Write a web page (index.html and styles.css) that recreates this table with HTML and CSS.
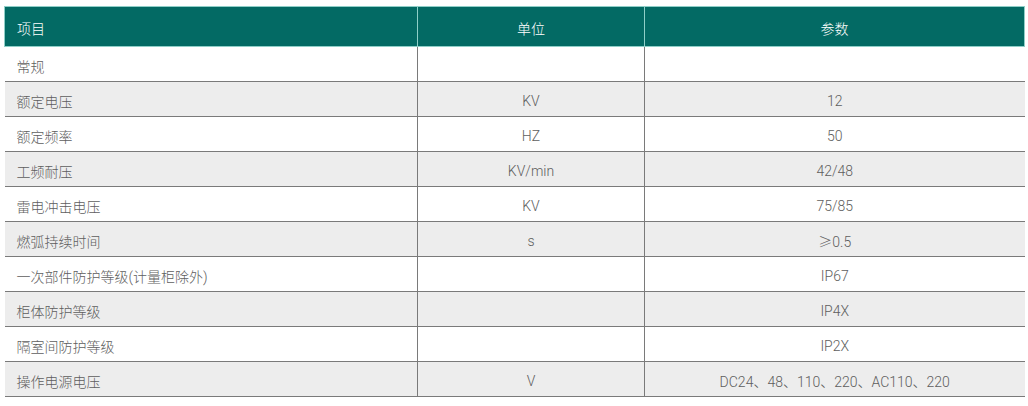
FILE: index.html
```html
<!DOCTYPE html>
<html lang="zh-CN">
<head>
<meta charset="utf-8">
<title>参数表</title>
<link rel="stylesheet" href="styles.css">
</head>
<body>
<table class="spec">
  <colgroup>
    <col class="c1"><col class="c2"><col class="c3">
  </colgroup>
  <thead>
    <tr><th class="left">项目</th><th>单位</th><th>参数</th></tr>
  </thead>
  <tbody>
    <tr><td class="left">常规</td><td></td><td></td></tr>
    <tr><td class="left">额定电压</td><td>KV</td><td>12</td></tr>
    <tr><td class="left">额定频率</td><td>HZ</td><td>50</td></tr>
    <tr><td class="left">工频耐压</td><td>KV/min</td><td>42/48</td></tr>
    <tr><td class="left">雷电冲击电压</td><td>KV</td><td>75/85</td></tr>
    <tr><td class="left">燃弧持续时间</td><td>s</td><td><span class="cjk">≥</span>0.5</td></tr>
    <tr><td class="left">一次部件防护等级(计量柜除外)</td><td></td><td>IP67</td></tr>
    <tr><td class="left">柜体防护等级</td><td></td><td>IP4X</td></tr>
    <tr><td class="left">隔室间防护等级</td><td></td><td>IP2X</td></tr>
    <tr><td class="left">操作电源电压</td><td>V</td><td>DC24、48、110、220、AC110、220</td></tr>
  </tbody>
</table>
</body>
</html>
```
FILE: styles.css
```css
html, body {
  margin: 0;
  padding: 0;
  background: #ffffff;
}
body {
  padding: 6px 4px 0 4px;
  font-family: Roboto, "Noto Sans CJK SC", "Noto Sans", sans-serif;
  font-weight: 300;
}
.spec {
  width: 1020px;
  border-collapse: collapse;
  table-layout: fixed;
  font-size: 14px;
}
.c1 { width: 413px; }
.c2 { width: 227px; }
.c3 { width: 380px; }
.spec th {
  height: 40px;
  padding: 2px 0 0 0;
  background: #036a64;
  color: #ffffff;
  font-weight: 300;
  text-align: center;
  border: 1px solid #8fcfc8;
  box-sizing: border-box;
}
.spec td {
  height: 35px;
  padding: 3px 0 0 0;
  color: #5e5e5e;
  text-align: center;
  border: 1px solid #7a7a7a;
  border-top: none;
  box-sizing: border-box;
}
.spec td:first-child { border-left: none; }
.spec td:last-child { border-right: none; }
.spec .left {
  text-align: left;
  padding-left: 12px;
}
.spec tbody tr:nth-child(even) td {
  background: #ededed;
}
.cjk {
  font-family: "Noto Sans CJK SC", sans-serif;
}
```
